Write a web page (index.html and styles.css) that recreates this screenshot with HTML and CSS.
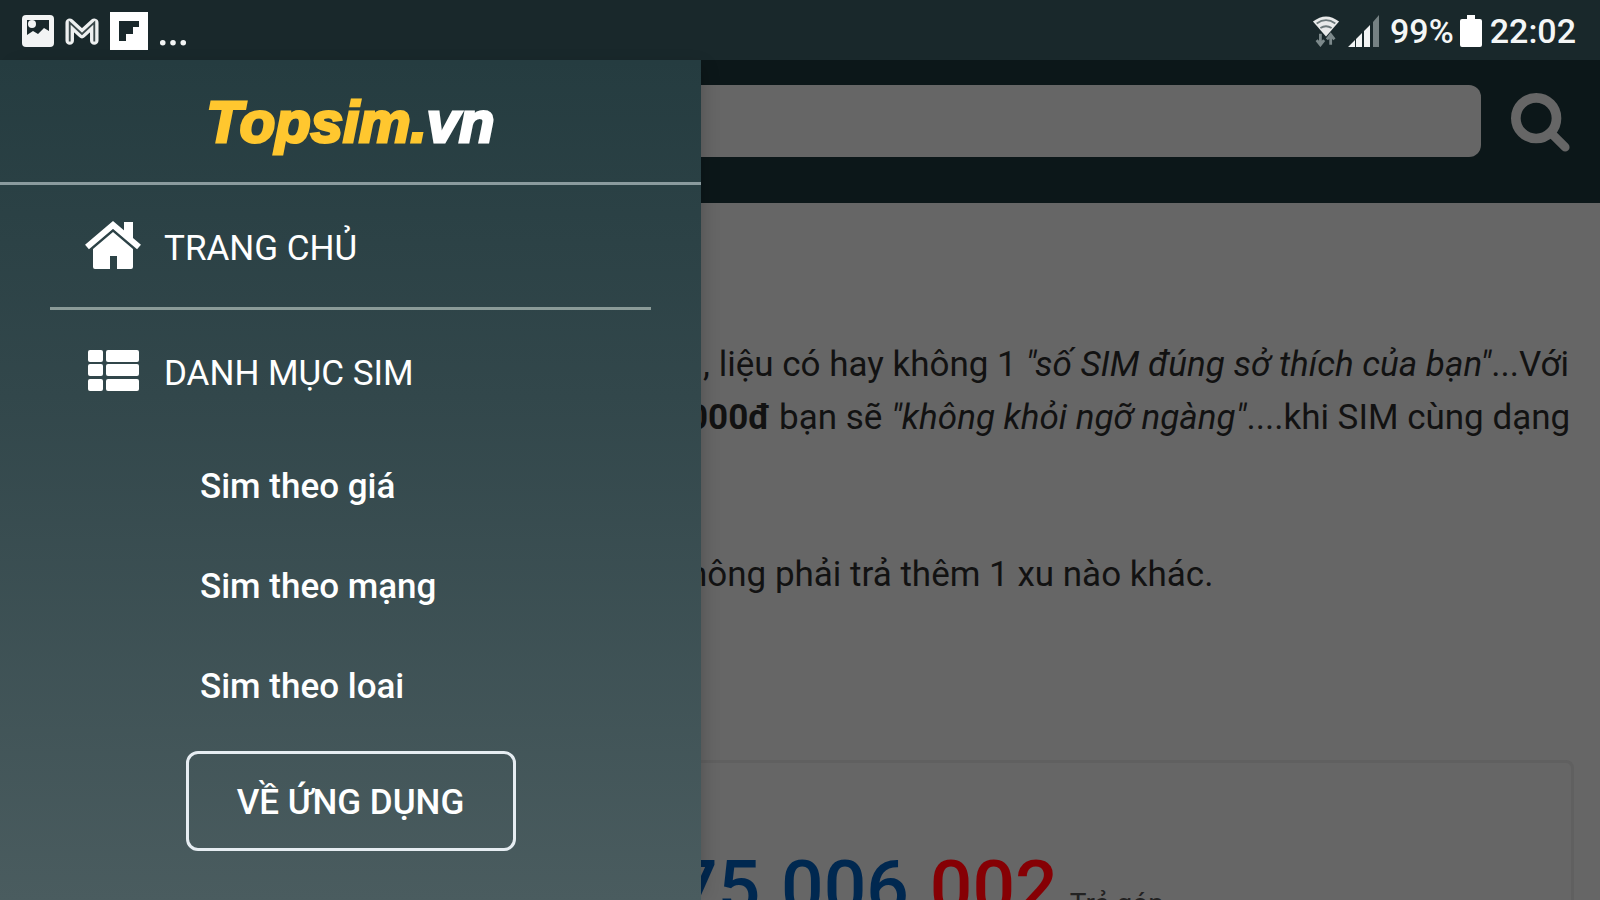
FILE: index.html
```html
<!DOCTYPE html>
<html lang="vi">
<head>
<meta charset="utf-8">
<meta name="viewport" content="width=device-width, initial-scale=1">
<title>Topsim.vn</title>
<link rel="stylesheet" href="styles.css">
</head>
<body>
<div class="app">
  <header class="status">
    <div class="status-left">
      <svg class="ic-photo" viewBox="0 0 32 32" aria-hidden="true"><rect width="32" height="32" rx="4" fill="#f2f4f4"/><path d="M5 5h22v11l-5-3-6 6-5-3-6 4z" fill="#19282b"/><circle cx="10" cy="9" r="4" fill="#f2f4f4"/></svg>
      <svg class="ic-mail" viewBox="0 0 36 30" aria-hidden="true"><path d="M5 25V6l13 12L31 6v19" fill="none" stroke="#eef0f0" stroke-width="9" stroke-linejoin="round" stroke-linecap="round"/><path d="M5 26V6l13 12L31 6v20" fill="none" stroke="#3b484a" stroke-width="2"/></svg>
      <svg class="ic-flip" viewBox="0 0 38 38" aria-hidden="true"><rect width="38" height="38" fill="#fff"/><path d="M9 9h20v6h-6v7h-7v7H9z" fill="#19282b"/></svg>
      <svg class="ic-dots" viewBox="0 0 30 8" aria-hidden="true"><g fill="#f2f4f4"><circle cx="4" cy="4" r="3"/><circle cx="15" cy="4" r="3"/><circle cx="26" cy="4" r="3"/></g></svg>
    </div>
    <div class="status-right">
      <svg class="ic-wifi" viewBox="0 0 30 34" aria-hidden="true"><path d="M1 7Q15-4 29 7L15 23z" fill="#e8eaea"/><path d="M5 9q10-7 20 0M9 14q6-4 12 0" fill="none" stroke="#6b787a" stroke-width="2"/><path d="M9 20v11m-4-4 4 5 4-5M20 32V21m-4 5 4-5 4 5" fill="none" stroke="#7c898b" stroke-width="3"/></svg>
      <svg class="ic-signal" viewBox="0 0 32 32" aria-hidden="true"><path d="M0 32l7-7v7zM8 24l6-6v14H8zM16 16l6-6v22h-6z" fill="#f2f4f4"/><path d="M25 7l6-7v32h-6z" fill="#758183"/></svg>
      <span class="percent">99%</span>
      <svg class="ic-battery" viewBox="0 0 22 32" aria-hidden="true"><path d="M7 0h8v4h5q2 0 2 2v24q0 2-2 2H2q-2 0-2-2V6q0-2 2-2h5z" fill="#fff"/></svg>
      <time class="clock">22:02</time>
    </div>
  </header>

  <div class="stage">
    <main class="page">
      <form class="search">
        <input class="search-field" type="search" aria-label="Tìm sim">
        <button class="search-button" type="button" aria-label="Tìm kiếm">
          <svg viewBox="0 0 62 62" aria-hidden="true"><circle cx="26" cy="26" r="21" fill="none" stroke="#666" stroke-width="10"/><path d="M42 42l14 14" stroke="#666" stroke-width="9" stroke-linecap="round"/></svg>
        </button>
      </form>
      <article class="intro">
        <p class="intro-lines">, liệu có hay không 1 <em>"số SIM đúng sở thích của bạn"</em>...Với<br><b>000đ</b> bạn sẽ <em>"không khỏi ngỡ ngàng"</em>....khi SIM cùng dạng</p>
        <p class="intro-note">hông phải trả thêm 1 xu nào khác.</p>
      </article>
      <section class="card">
        <p class="number">75.006.<span class="number-tail">002</span><small class="tag">Trả góp</small></p>
      </section>
    </main>

    <aside class="drawer">
      <a class="logo" href="#">Topsim.<span class="logo-tld">vn</span></a>
      <nav class="menu">
        <a class="menu-item" href="#">
          <svg class="menu-icon" viewBox="0 0 56 50" aria-hidden="true"><path d="M39 1h9v18l-9-8z" fill="#fff"/><path d="M2 26 28 4l26 22" fill="none" stroke="#fff" stroke-width="6"/><path d="M8 28 28 11l20 17v18q0 2-2 2H32V35h-7v13H10q-2 0-2-2z" fill="#fff"/><path d="M6 28 28 9l22 19" fill="none" stroke="#2e4348" stroke-width="1"/></svg>
          <span class="menu-label">TRANG CHỦ</span>
        </a>
        <hr class="divider">
        <a class="menu-item" href="#">
          <svg class="menu-icon" viewBox="0 0 56 50" aria-hidden="true"><g fill="#fff"><rect x="3" y="4" width="15" height="12" rx="2"/><rect x="21" y="4" width="33" height="12" rx="2"/><rect x="3" y="18" width="15" height="12" rx="2"/><rect x="21" y="18" width="33" height="12" rx="2"/><rect x="3" y="33" width="15" height="12" rx="2"/><rect x="21" y="33" width="33" height="12" rx="2"/></g></svg>
          <span class="menu-label">DANH MỤC SIM</span>
        </a>
        <ul class="submenu">
          <li><a href="#">Sim theo giá</a></li>
          <li><a href="#">Sim theo mạng</a></li>
          <li><a href="#">Sim theo loai</a></li>
        </ul>
      </nav>
      <button class="about" type="button">VỀ ỨNG DỤNG</button>
    </aside>
  </div>
</div>
</body>
</html>
```
FILE: styles.css
```css
* { box-sizing: border-box; }

body {
  margin: 0;
  font-family: Roboto, "Liberation Sans", sans-serif;
  background: #666;
}

a { color: inherit; text-decoration: none; }
svg { display: block; flex: none; }

.app {
  height: 100vh;
  display: flex;
  flex-direction: column;
  overflow: hidden;
}

/* Status bar */
.status {
  display: flex;
  justify-content: space-between;
  height: 60px;
  padding: 0 24px 0 22px;
  background: #19282b;
  color: #f4f6f6;
  flex: none;
}
.status-left, .status-right { display: flex; align-items: center; padding-top: 2px; }
.status-left { gap: 11px; }
.ic-photo { width: 32px; }
.ic-mail { width: 34px; }
.ic-flip { width: 38px; }
.ic-dots { width: 28px; margin-top: 24px; }
.ic-wifi { width: 28px; margin-right: 8px; }
.ic-signal { width: 32px; margin-right: 10px; }
.ic-battery { width: 22px; margin: 0 8px 0 6px; }
.percent, .clock {
  font-size: 34px;
  font-weight: 500;
  line-height: 60px;
}

.stage { position: relative; flex: 1; min-height: 0; }

/* Dimmed page */
.page { height: 100%; color: #121212; background: #666; overflow: hidden; }
.search {
  display: flex;
  gap: 30px;
  padding: 25px 29px 46px 43%;
  background: #0c1719;
}
.search-field {
  flex: 1;
  min-width: 0;
  height: 72px;
  border: 0;
  border-radius: 12px;
  background: #666;
  font: inherit;
  font-size: 34px;
  outline: 0;
}
.search-button { width: 60px; height: 72px; padding: 4px 0 0; border: 0; background: none; }
.search-button svg { width: 60px; }

.intro { padding: 135px 31px 0 43%; }
.intro p { margin: 0; font-size: 35px; line-height: 53px; white-space: nowrap; }
.intro-lines { text-align: right; }
.intro .intro-note { margin-top: 104px; }

.card {
  margin: 159px 26px 0 32px;
  padding: 80px 0 0 40%;
  height: 400px;
  border: 3px solid #606060;
  border-radius: 8px;
}
.number { margin: 0; font-size: 75px; line-height: 88px; font-weight: 500; color: #002850; white-space: nowrap; }
.number-tail { color: #860004; }
.tag { margin-left: 12px; font-size: 28px; font-weight: 400; color: #222; }

/* Drawer over the page */
.drawer {
  position: absolute;
  inset: 0 auto 0 0;
  width: 44%;
  max-width: 701px;
  display: flex;
  flex-direction: column;
  align-items: center;
  color: #fff;
  background: linear-gradient(#253c40, #32474b 40%, #4a5c5f);
  box-shadow: 8px 0 16px -6px rgba(0, 0, 0, .2);
}
.logo {
  width: 100%;
  height: 125px;
  border-bottom: 3px solid #8b9b9e;
  text-align: center;
  font: italic bold 58px/124px "Liberation Sans Narrow", "Liberation Sans", sans-serif;
  color: #ffc72f;
  -webkit-text-stroke: 3px currentColor;
}
.logo-tld { color: #fff; }
.menu { width: 100%; padding: 0 50px; font-size: 35px; }
.menu-item { display: flex; align-items: center; gap: 23px; height: 122px; padding-left: 35px; }
.menu-icon { width: 56px; }
.menu-label { padding-top: 4px; }
.divider { margin: 0; border: 0; height: 3px; background: #8b9b98; }
.submenu { margin: 0; padding: 5px 0 0 150px; list-style: none; font-weight: 500; line-height: 100px; }
.about {
  width: 330px;
  height: 100px;
  margin-top: 14px;
  padding: 4px 0 0;
  border: 3px solid #e6edf2;
  border-radius: 12px;
  background: none;
  color: #fff;
  font: 500 35px/40px Roboto, "Liberation Sans", sans-serif;
}
```
